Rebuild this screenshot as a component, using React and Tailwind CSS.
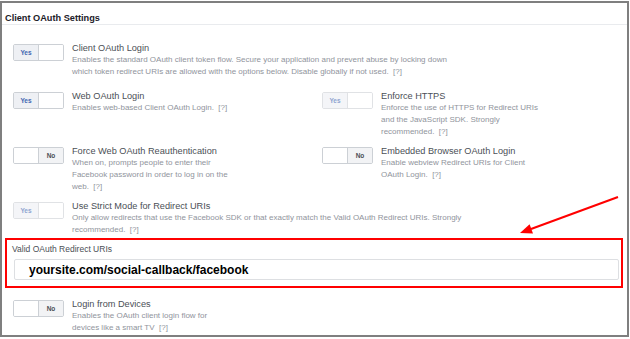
import React from "react";

function Toggle({ on, faded }) {
  return (
    <div
      className={`flex h-[17px] w-[51px] shrink-0 overflow-hidden rounded-[2px] border border-[#ccd0d5] bg-white ${
        faded ? "opacity-60" : ""
      }`}
    >
      {on ? (
        <>
          <div className="flex w-[25px] items-center justify-center border-r border-[#ccd0d5] bg-[#eef0f4] text-[6.5px] font-bold text-[#4267b2]">
            Yes
          </div>
          <div className="flex-1 bg-white" />
        </>
      ) : (
        <>
          <div className="flex-1 bg-white" />
          <div className="flex w-[25px] items-center justify-center border-l border-[#ccd0d5] bg-[#f2f3f5] text-[6.5px] font-bold text-[#4b4f56]">
            No
          </div>
        </>
      )}
    </div>
  );
}

function Setting({ on, faded, title, lines }) {
  return (
    <div className="flex items-start gap-[8px]">
      <Toggle on={on} faded={faded} />
      <div className="-mt-[2px]">
        <div className="text-[9.2px] leading-[12px] text-[#4b4f56] whitespace-nowrap">{title}</div>
        <div className="text-[8px] leading-[12px] text-[#90949c]">
          {lines.map((l, i) => (
            <div key={i} className="whitespace-nowrap">
              {l}
            </div>
          ))}
        </div>
      </div>
    </div>
  );
}

export default function App() {
  return (
    <div className="relative h-[339px] w-[630px] bg-white font-['Liberation_Sans',Arial,sans-serif]">
      <div className="mt-[1px] h-[336px] w-[629px] border-2 border-[#7f7f7f] bg-white">
        <div className="h-[22px] border-b border-[#e9ebee] pl-[3px] pt-[1px]">
          <span className="text-[9.2px] font-bold leading-[12px] text-[#1d2129]">Client OAuth Settings</span>
        </div>

        <div className="pt-[19px]">
          <div className="h-[48px] pl-[11px]">
            <Setting
              on
              title="Client OAuth Login"
              lines={[
                "Enables the standard OAuth client token flow. Secure your application and prevent abuse by locking down",
                "which token redirect URIs are allowed with the options below. Disable globally if not used.\u00a0 [?]",
              ]}
            />
          </div>

          <div className="flex h-[55px] pl-[11px]">
            <div className="w-[309px]">
              <Setting on title="Web OAuth Login" lines={["Enables web-based Client OAuth Login.\u00a0 [?]"]} />
            </div>
            <Setting
              on
              faded
              title="Enforce HTTPS"
              lines={["Enforce the use of HTTPS for Redirect URIs", "and the JavaScript SDK. Strongly", "recommended.\u00a0 [?]"]}
            />
          </div>

          <div className="flex h-[55px] pl-[11px]">
            <div className="w-[309px]">
              <Setting
                title="Force Web OAuth Reauthentication"
                lines={["When on, prompts people to enter their", "Facebook password in order to log in on the", "web.\u00a0 [?]"]}
              />
            </div>
            <Setting
              title="Embedded Browser OAuth Login"
              lines={["Enable webview Redirect URIs for Client", "OAuth Login.\u00a0 [?]"]}
            />
          </div>

          <div className="h-[36px] pl-[11px]">
            <Setting
              on
              faded
              title="Use Strict Mode for Redirect URIs"
              lines={[
                "Only allow redirects that use the Facebook SDK or that exactly match the Valid OAuth Redirect URIs. Strongly",
                "recommended.\u00a0 [?]",
              ]}
            />
          </div>

          <div className="ml-[3px] mr-[4px] border-2 border-[#ff0000] pb-[6px] pt-[3px]">
            <div className="pl-[5px] text-[8.5px] leading-[12px] text-[#4b4f56]">Valid OAuth Redirect URIs</div>
            <div className="ml-[7px] mr-[2px] mt-[4px] flex h-[21px] items-center rounded-[2px] border border-[#dddfe2] bg-white pl-[14px]">
              <span className="text-[12px] font-bold leading-none text-black">yoursite.com/social-callback/facebook</span>
            </div>
          </div>

          <div className="mt-[12px] pl-[11px]">
            <Setting
              title="Login from Devices"
              lines={["Enables the OAuth client login flow for", "devices like a smart TV\u00a0 [?]"]}
            />
          </div>
        </div>
      </div>

      <svg className="pointer-events-none absolute left-0 top-0" width="630" height="339" viewBox="0 0 630 339">
        <line x1="618" y1="196" x2="531" y2="228" stroke="#ff0000" strokeWidth="2" />
        <polygon points="520,232 529.6,223.2 533,232.6" fill="#ff0000" />
      </svg>
    </div>
  );
}
